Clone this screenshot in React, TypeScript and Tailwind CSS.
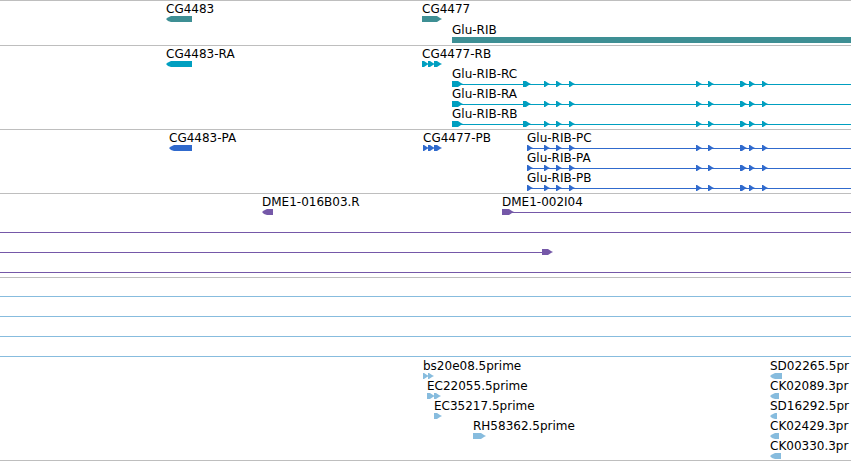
type Exon = { start: number; end: number };

type Feature = {
  name?: string;
  start: number;
  strand?: "left" | "right" | "none";
  exons?: Exon[];
  // line behind the exons, without an end it runs to the window edge
  line?: { from: number; to?: number };
};

type Track = {
  id: string;
  color: string;
  rows: Feature[][];
};

// ----- exons shared by the Glu-RIB transcripts and proteins -----
const GLU_EXONS: Exon[] = [
  { start: 544, end: 550 },
  { start: 556, end: 562 },
  { start: 569, end: 575 },
  { start: 696, end: 702 },
  { start: 708, end: 714 },
  { start: 740, end: 747 },
  { start: 749, end: 755 },
  { start: 762, end: 768 },
];

const gluTranscript = (name: string): Feature => ({
  name,
  start: 452,
  exons: [{ start: 452, end: 463 }, { start: 523, end: 531 }, ...GLU_EXONS],
  line: { from: 452 },
});

const gluProtein = (name: string): Feature => ({
  name,
  start: 527,
  exons: [{ start: 527, end: 533 }, ...GLU_EXONS],
  line: { from: 527 },
});

const single = (
  name: string,
  start: number,
  end: number,
  strand: "left" | "right" = "right"
): Feature => ({ name, start, strand, exons: [{ start, end }] });

const fullLine: Feature = { start: 0, line: { from: 0 } };

const TRACKS: Track[] = [
  {
    id: "genes",
    color: "text-[#3e8f94]",
    rows: [
      [single("CG4483", 166, 192, "left"), single("CG4477", 422, 442)],
      [{ name: "Glu-RIB", start: 452, strand: "none" }],
    ],
  },
  {
    id: "transcripts",
    color: "text-[#009fc0]",
    rows: [
      [
        single("CG4483-RA", 166, 192, "left"),
        {
          name: "CG4477-RB",
          start: 422,
          exons: [
            { start: 422, end: 429 },
            { start: 428, end: 435 },
            { start: 434, end: 442 },
          ],
        },
      ],
      [gluTranscript("Glu-RIB-RC")],
      [gluTranscript("Glu-RIB-RA")],
      [gluTranscript("Glu-RIB-RB")],
    ],
  },
  {
    id: "proteins",
    color: "text-[#306acd]",
    rows: [
      [
        single("CG4483-PA", 169, 192, "left"),
        {
          name: "CG4477-PB",
          start: 423,
          exons: [
            { start: 423, end: 429 },
            { start: 428, end: 435 },
            { start: 434, end: 442 },
          ],
        },
        gluProtein("Glu-RIB-PC"),
      ],
      [gluProtein("Glu-RIB-PA")],
      [gluProtein("Glu-RIB-PB")],
    ],
  },
  {
    id: "clones",
    color: "text-[#7558a8]",
    rows: [
      [
        single("DME1-016B03.R", 262, 273, "left"),
        { ...single("DME1-002I04", 502, 514), line: { from: 502 } },
      ],
      [fullLine],
      [{ start: 0, exons: [{ start: 542, end: 553 }], line: { from: 0, to: 546 } }],
      [fullLine],
    ],
  },
  {
    id: "ests",
    color: "text-[#87bcde]",
    rows: [
      [fullLine],
      [fullLine],
      [fullLine],
      [fullLine],
      [
        {
          name: "bs20e08.5prime",
          start: 423,
          exons: [
            { start: 423, end: 429 },
            { start: 428, end: 434 },
          ],
        },
        single("SD02265.5pr", 770, 782, "left"),
      ],
      [
        {
          name: "EC22055.5prime",
          start: 427,
          exons: [
            { start: 427, end: 435 },
            { start: 434, end: 441 },
          ],
        },
        single("CK02089.3pr", 770, 779, "left"),
      ],
      [single("EC35217.5prime", 434, 442), single("SD16292.5pr", 770, 777, "left")],
      [single("RH58362.5prime", 473, 486), single("CK02429.3pr", 770, 779, "left")],
      [single("CK00330.3pr", 770, 781, "left")],
    ],
  },
];

// the head bulges a little between neck and tip
const exonPoints = ({ start, end }: Exon, strand: Feature["strand"]) => {
  const head = Math.min(5, end - start - 1);
  if (strand === "left") {
    const neck = start + head;
    const mid = start + 2;
    return `${end},0 ${neck},0 ${mid},1.5 ${start},3 ${mid},5 ${neck},6 ${end},6`;
  }
  const neck = end - head;
  const mid = end - 2;
  return `${start},0 ${neck},0 ${mid},2 ${end},3 ${mid},4 ${neck},6 ${start},6`;
};

const Glyph = ({ feature }: { feature: Feature }) => (
  <g>
    {feature.strand === "none" && (
      <rect x={feature.start} y="0" width="100%" height="6" />
    )}
    {feature.line && (
      <rect
        x={feature.line.from}
        y="3"
        width={feature.line.to ? feature.line.to - feature.line.from : "100%"}
        height="1"
      />
    )}
    {feature.exons?.map((exon) => (
      <polygon key={exon.start} points={exonPoints(exon, feature.strand)} />
    ))}
  </g>
);

const Row = ({ features }: { features: Feature[] }) => (
  <div>
    {/* --- Labels, placed at their map position --- */}
    <div className="relative h-[14px] text-black">
      {features.map(
        (feature) =>
          feature.name && (
            <span
              key={feature.name}
              className="absolute top-0 whitespace-nowrap"
              style={{ left: feature.start }}
            >
              {feature.name}
            </span>
          )
      )}
    </div>

    {/* --- Glyphs --- */}
    <svg className="block h-[6px] w-full fill-current" aria-hidden="true">
      {features.map((feature) => (
        <Glyph key={feature.start} feature={feature} />
      ))}
    </svg>
  </div>
);

const App = () => {
  return (
    <main className="w-full overflow-hidden border-b border-[#bebebe] bg-white font-['DejaVu_Sans',sans-serif] text-[12px] leading-[14px]">
      {TRACKS.map((track) => (
        <section
          key={track.id}
          className={`flex flex-col border-t border-[#bebebe] pt-px pb-[2px] last:pb-px first:gap-px ${track.color}`}
        >
          {track.rows.map((features, index) => (
            <Row key={index} features={features} />
          ))}
        </section>
      ))}
    </main>
  );
};

export default App;
